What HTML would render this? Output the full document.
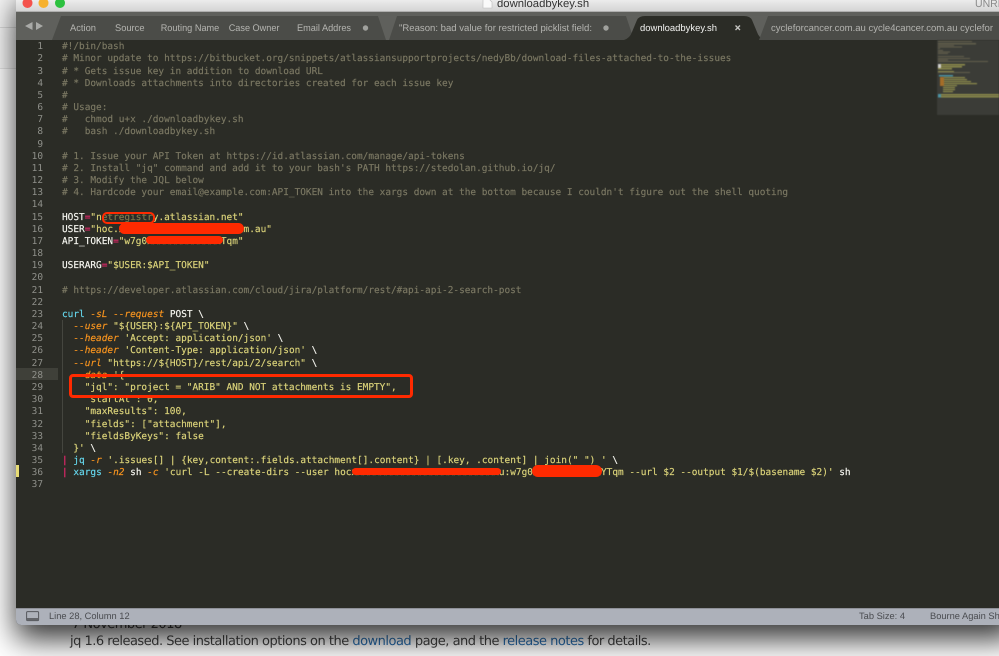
<!DOCTYPE html>
<html lang="en"><head><meta charset="utf-8"><title>downloadbykey.sh</title>
<style>
html,body{margin:0;padding:0;background:#fff}
body{width:999px;height:656px;overflow:hidden;position:relative;font-family:"Liberation Sans",sans-serif;text-rendering:geometricPrecision}
.abs{position:absolute}
#win{position:absolute;left:16px;top:-10px;width:1000px;height:635px;border-radius:5px;box-shadow:0 14px 30px rgba(0,0,0,.8);overflow:hidden;background:#2b2c26}
#code{position:absolute;left:62px;top:41.2px;margin:0;font:9.44px/12.17px "DejaVu Sans Mono","Liberation Mono",monospace;color:#f8f8f2;white-space:pre;filter:blur(.3px);-webkit-text-stroke:.15px currentColor}
#nums{position:absolute;left:16px;width:27px;top:41.2px;margin:0;text-align:right;font:9.44px/12.17px "DejaVu Sans Mono","Liberation Mono",monospace;color:#8f908a;white-space:pre;filter:blur(.3px)}
.c{color:#7b7863}.s{color:#dcd47a}.p{color:#f92672}.o{color:#fd971f;font-style:italic}.b{color:#66d9ef}
.r{position:absolute;background:#ff2a00;border-radius:6px}
a{color:#2a6fb0;text-decoration:none}
.t{position:absolute;font:13px 'DejaVu Sans',sans-serif;letter-spacing:-.5px;color:#444;white-space:pre}
.st{position:absolute;font-size:9.3px;line-height:13px;color:#4a4c50;white-space:pre;filter:blur(.2px)}
</style></head><body>
<div class="abs" style="left:0;top:0;width:16px;height:68px;background:#f6f6f6;border-bottom:1px solid #e4e4e4"></div>
<div class="abs" style="left:0;top:27px;width:16px;height:1px;background:#dcdcdc"></div>
<div class="t" style="left:70px;top:634px">jq 1.6 released. See installation options on the <a>download</a> page, and the <a>release notes</a> for details.</div>
<div class="t" style="left:72px;top:617px">7 November 2018</div>

<div id="win"></div>

<svg class="abs" style="left:0;top:0" width="999" height="42" viewBox="0 0 999 42">
  <defs><linearGradient id="tb" x1="0" y1="0" x2="0" y2="1"><stop offset="0" stop-color="#ececec"/><stop offset="1" stop-color="#d2d2d2"/></linearGradient></defs>
  <rect x="16" y="0" width="983" height="12" fill="url(#tb)"/>
  <rect x="16" y="11.500" width="983" height="1" fill="#8a8a88"/>
  <circle cx="27.500" cy="3" r="5" fill="#f4524c"/>
  <circle cx="43.500" cy="3" r="5" fill="#f6b12e"/>
  <circle cx="60" cy="3" r="5" fill="#2cc13f"/>
  <path d="M483 -1h6l3 3v6h-9z" fill="#fafafa" stroke="#bbb" stroke-width=".6"/>
  <rect x="16" y="12" width="983" height="28" fill="#5f605c"/>
  <path d="M52 40L61 16H378L386 40Z" fill="#4b4c48"/>
  <path d="M386 40L394 16H623L631 40Z" fill="#4b4c48" transform="translate(3 0)"/>
  <path d="M624 40Q630 38 632 32L637 20Q639 16 645 16H744Q750 16 752 20L757 32Q759 38 765 40Z" fill="#2b2c26"/>
  <path d="M759 40L768 16H999V40Z" fill="#4b4c48"/>
  <path d="M32.500 22V30L25 26Z" fill="#a9aaa7"/>
  <path d="M36 22V30L43 26Z" fill="#a9aaa7"/>
  <g font-family="Liberation Sans, sans-serif" font-size="9.600" fill="#b4b4b0">
    <text x="70" y="31" textLength="26" lengthAdjust="spacingAndGlyphs">Action</text>
    <text x="115" y="31" textLength="29.500" lengthAdjust="spacingAndGlyphs">Source</text>
    <text x="160.700" y="31" textLength="58.600" lengthAdjust="spacingAndGlyphs">Routing Name</text>
    <text x="228.700" y="31" textLength="50.800" lengthAdjust="spacingAndGlyphs">Case Owner</text>
    <text x="297" y="31" textLength="54" lengthAdjust="spacingAndGlyphs">Email Addres</text>
    <circle cx="365.500" cy="28" r="2.700" fill="#a0a19d"/>
    <text x="399" y="31" textLength="193" lengthAdjust="spacingAndGlyphs">"Reason: bad value for restricted picklist field:</text>
    <circle cx="606" cy="28" r="2.700" fill="#a0a19d"/>
    <text x="640" y="31" fill="#f2f2f0" textLength="77" lengthAdjust="spacingAndGlyphs">downloadbykey.sh</text>
    <path d="M735.500 25.500L740 30M740 25.500L735.500 30" stroke="#c6c6c2" stroke-width="1.300" fill="none"/>
    <text x="771" y="31" textLength="222" lengthAdjust="spacingAndGlyphs">cycleforcancer.com.au cycle4cancer.com.au cyclefor</text>
  </g>
</svg>
<div class="abs" style="left:497px;top:-2px;font-size:11.300px;color:#333;white-space:pre">downloadbykey.sh</div>
<div class="abs" style="left:975px;top:-2px;font-size:10.500px;color:#8a8a8a;white-space:pre">UNRE</div>

<div class="abs" style="left:16px;top:368px;width:42px;height:12px;background:#3f4039"></div>
<div class="abs" style="left:16px;top:465px;width:3px;height:12px;background:#e6db74"></div>
<div class="abs" style="left:62px;top:320px;width:1px;height:133px;background:#45463f"></div>

<pre id="nums">1
2
3
4
5
6
7
8
9
10
11
12
13
14
15
16
17
18
19
20
21
22
23
24
25
26
27
28
29
30
31
32
33
34
35
36
37</pre>
<pre id="code"><span class="c">#!/bin/bash
# Minor update to https://bitbucket.org/snippets/atlassiansupportprojects/nedyBb/download-files-attached-to-the-issues
# * Gets issue key in addition to download URL
# * Downloads attachments into directories created for each issue key
#
# Usage:
#   chmod u+x ./downloadbykey.sh
#   bash ./downloadbykey.sh

# 1. Issue your API Token at https://id.atlassian.com/manage/api-tokens
# 2. Install "jq" command and add it to your bash's PATH https://stedolan.github.io/jq/
# 3. Modify the JQL below
# 4. Hardcode your email@example.com:API_TOKEN into the xargs down at the bottom because I couldn't figure out the shell quoting</span>

HOST<span class="p">=</span><span class="s">"netregistry.atlassian.net"</span>
USER<span class="p">=</span><span class="s">"hoc.xxxxxxxxxxxxxxxxxxxxxxm.au"</span>
API_TOKEN<span class="p">=</span><span class="s">"w7g0xxxxxxxxxxxxxTqm"</span>

USERARG<span class="p">=</span><span class="s">"$USER:$API_TOKEN"</span>

<span class="c"># https://developer.atlassian.com/cloud/jira/platform/rest/#api-api-2-search-post</span>

<span class="b">curl</span> <span class="o">-sL</span> <span class="o">--request</span> POST \
  <span class="o">--user</span> <span class="s">"${USER}:${API_TOKEN}"</span> \
  <span class="o">--header</span> <span class="s">'Accept: application/json'</span> \
  <span class="o">--header</span> <span class="s">'Content-Type: application/json'</span> \
  <span class="o">--url</span> <span class="s">"https://${HOST}/rest/api/2/search"</span> \
  <span class="o">--data</span> <span class="s">'{
    "jql": "project = "ARIB" AND NOT attachments is EMPTY",
    "startAt": 0,
    "maxResults": 100,
    "fields": ["attachment"],
    "fieldsByKeys": false
  }'</span> \
<span class="p">|</span> <span class="b">jq</span> <span class="o">-r</span> <span class="s">'.issues[] | {key,content:.fields.attachment[].content} | [.key, .content] | join(" ") '</span> \
<span class="p">|</span> <span class="b">xargs</span> <span class="o">-n2</span> sh <span class="o">-c</span> <span class="s">'curl -L --create-dirs --user hocxxxxxxxxxxxxxxxxxxxxxxxxxxu:w7g0xxxxxxxxxxxxYTqm --url $2 --output $1/$(basename $2)'</span> sh
</pre>

<div class="abs" style="left:102px;top:211.500px;width:49px;height:8px;border:2px solid #ff2a00;border-radius:5px;background:rgba(43,44,38,.55)"></div>
<div class="r" style="left:119px;top:223px;width:125px;height:11px"></div>
<div class="r" style="left:146px;top:236px;width:77px;height:8px;border-radius:4px"></div>
<div class="abs" style="left:69px;top:373.500px;width:338px;height:18px;border:3px solid #ff2a00;border-radius:4px"></div>
<div class="r" style="left:352px;top:468px;width:149px;height:7px;border-radius:4px"></div>
<div class="r" style="left:532px;top:465px;width:70px;height:12px"></div>

<svg class="abs" style="left:937px;top:40px;filter:blur(.4px)" width="62" height="75" viewBox="0 0 62 75">
  <rect width="62" height="75" fill="#3b3c37"/>
  <g fill="#625f4c">
    <rect x="1" y="1" width="34" height="1"/><rect x="1" y="3" width="38" height="1.500"/><rect x="1" y="5" width="16" height="1"/><rect x="1" y="6.500" width="24" height="1"/>
    <rect x="1" y="8" width="2" height="1"/><rect x="1" y="10" width="5" height="1"/><rect x="1" y="11.500" width="12" height="1"/><rect x="1" y="13" width="10" height="1"/>
    <rect x="1" y="16" width="26" height="1"/><rect x="1" y="18" width="32" height="1"/><rect x="1" y="19.500" width="10" height="1"/><rect x="1" y="21" width="50" height="1"/>
    <rect x="1" y="32" width="32" height="1"/>
  </g>
  <g fill="#8e8c4c">
    <rect x="1" y="24" width="27" height="1.500"/><rect x="3" y="26" width="22" height="1.500"/><rect x="1" y="28" width="14" height="1.500"/><rect x="1" y="31" width="16" height="1"/>
    <rect x="6" y="37" width="22" height="1.200"/><rect x="6" y="39" width="24" height="1.200"/><rect x="6" y="41" width="28" height="1.200"/><rect x="6" y="43" width="34" height="1.200"/>
    <rect x="6" y="45" width="14" height="1.200"/><rect x="6" y="47" width="12" height="1.200"/><rect x="6" y="49" width="12" height="1.200"/><rect x="6" y="51" width="10" height="1.200"/>
    <rect x="4" y="54" width="58" height="1.500"/><rect x="4" y="56" width="58" height="1.500"/>
  </g>
  <rect x="3" y="37" width="4" height="9" fill="#a56d28"/><rect x="2" y="35" width="14" height="1.500" fill="#4c93a3"/>
  <rect x="1" y="54" width="3" height="3.500" fill="#4c93a3"/><rect x="1" y="24" width="3" height="4" fill="#cfcfcb"/>
</svg>

<div class="abs" style="left:16px;top:608px;width:983px;height:17px;background:#adb1ba;border-top:1px solid #8f9198;box-sizing:border-box;border-bottom-left-radius:5px"></div>
<svg class="abs" style="left:26px;top:611px" width="14" height="11" viewBox="0 0 14 11"><rect x=".6" y=".6" width="12" height="9" rx="1" fill="none" stroke="#55575c" stroke-width="1"/><rect x="1" y="7" width="11" height="2.500" fill="#63656a"/></svg>
<div class="st" style="left:49px;top:610px">Line 28, Column 12</div>
<div class="st" style="left:859px;top:610px">Tab Size: 4</div>
<div class="st" style="left:930px;top:610px">Bourne Again Sh</div>
</body></html>
